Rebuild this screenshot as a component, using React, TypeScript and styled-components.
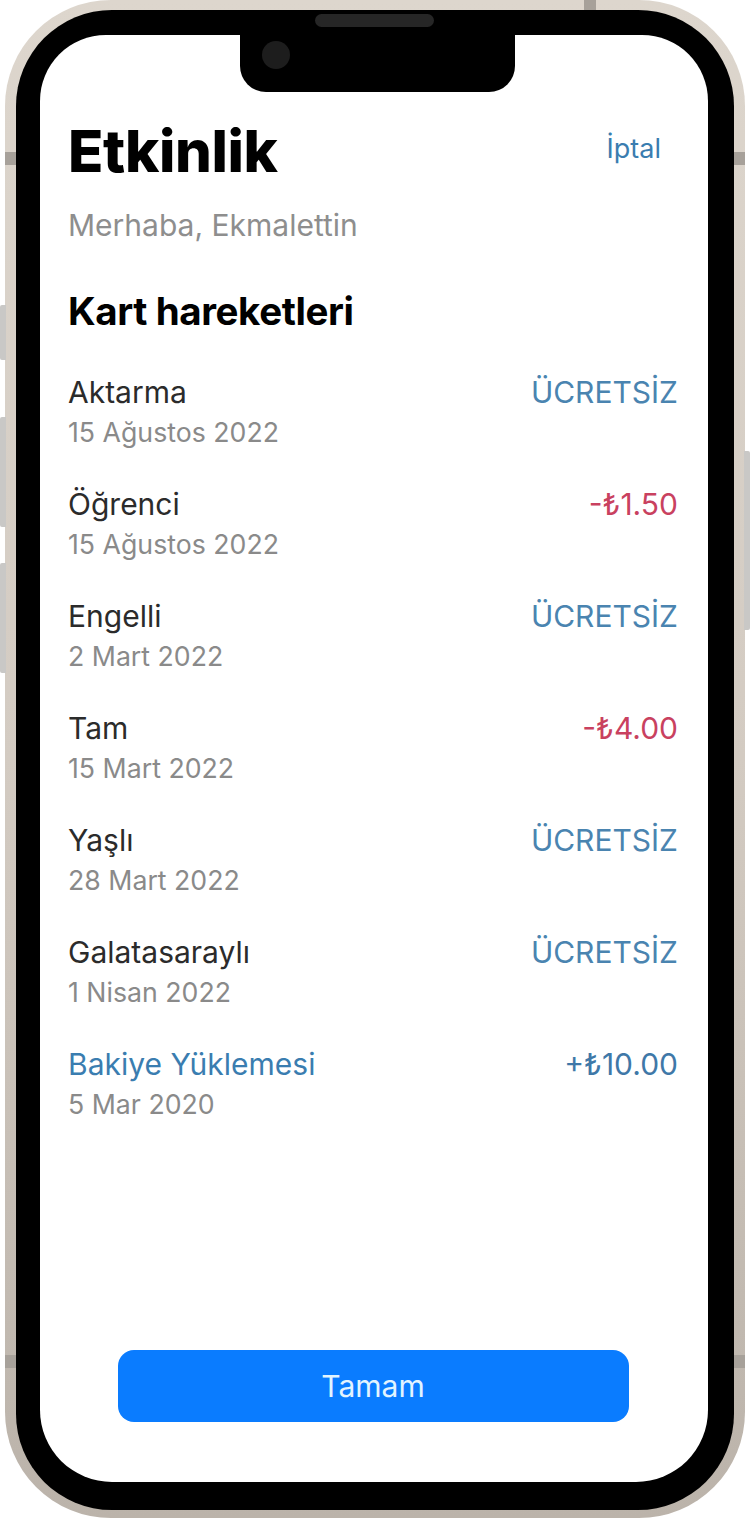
import React from "react";
import styled, { createGlobalStyle } from "styled-components";

const GlobalStyle = createGlobalStyle`
  html, body {
    margin: 0;
    padding: 0;
    background: #ffffff;
  }
  body {
    font-family: Inter, "Noto Sans", "DejaVu Sans", sans-serif;
    -webkit-font-smoothing: antialiased;
  }
  * { box-sizing: border-box; }
`;

const Page = styled.div`
  width: 750px;
  height: 1520px;
  position: relative;
  overflow: hidden;
`;

const Frame = styled.div`
  position: relative;
  margin-left: 5px;
  width: 740px;
  height: 1518px;
  padding: 10px 11px 8px 11px;
  border-radius: 106px;
  background: linear-gradient(180deg, #ddd6cd 0%, #d3cbc2 50%, #bbb3aa 100%);
`;

const SideButton = styled.div<{ $side: "left" | "right"; $top: number; $height: number }>`
  position: absolute;
  top: ${(p) => p.$top}px;
  height: ${(p) => p.$height}px;
  width: 6px;
  ${(p) => (p.$side === "left" ? "left: -5px;" : "right: -5px;")}
  background: #c9c8c6;
  border-radius: ${(p) => (p.$side === "left" ? "2px 0 0 2px" : "0 2px 2px 0")};
`;

const AntennaBand = styled.div<{ $x: number; $y: number; $w: number; $h: number }>`
  position: absolute;
  left: ${(p) => p.$x}px;
  top: ${(p) => p.$y}px;
  width: ${(p) => p.$w}px;
  height: ${(p) => p.$h}px;
  background: #a7a19a;
`;

const Bezel = styled.div`
  height: 100%;
  display: flex;
  flex-direction: column;
  align-items: stretch;
  padding: 4px 26px 28px 24px;
  border-radius: 96px;
  background: #000000;
`;

const Speaker = styled.div`
  align-self: center;
  flex: none;
  width: 119px;
  height: 13px;
  margin-bottom: 8px;
  border-radius: 7px;
  background: #262626;
`;

const Screen = styled.div`
  flex: 1;
  display: flex;
  flex-direction: column;
  padding: 0 30px 60px 28px;
  border-radius: 66px 66px 72px 72px;
  background: #ffffff;
  overflow: hidden;
`;

const Notch = styled.div`
  align-self: center;
  flex: none;
  display: flex;
  align-items: flex-start;
  width: 275px;
  height: 57px;
  margin-left: 8px;
  padding: 6px 0 0 22px;
  background: #000000;
  border-radius: 0 0 26px 26px;
`;

const Camera = styled.div`
  width: 28px;
  height: 28px;
  border-radius: 50%;
  background: #1d1d1d;
`;

const Header = styled.div`
  display: flex;
  justify-content: space-between;
  align-items: flex-start;
  padding-top: 25px;
`;

const Title = styled.h1`
  margin: 0;
  font-size: 58px;
  line-height: 68px;
  font-weight: 800;
  color: #000000;
  letter-spacing: -0.4px;
`;

const CancelLink = styled.span`
  margin-top: 16px;
  margin-right: 17px;
  font-size: 27px;
  line-height: 32px;
  color: #3a7db0;
`;

const Greeting = styled.p`
  margin: 22px 0 0;
  font-size: 30px;
  line-height: 36px;
  color: #8e8e8e;
`;

const SectionTitle = styled.h2`
  margin: 45px 0 0;
  font-size: 38.5px;
  line-height: 46px;
  font-weight: 700;
  color: #000000;
  letter-spacing: -0.4px;
`;

const List = styled.div`
  display: flex;
  flex-direction: column;
  gap: 32px;
  margin-top: 38px;
`;

const Row = styled.div`
  display: flex;
  justify-content: space-between;
  align-items: flex-start;
`;

const RowText = styled.div`
  display: flex;
  flex-direction: column;
`;

const Name = styled.span<{ $accent?: boolean }>`
  font-size: 30px;
  line-height: 40px;
  color: ${(p) => (p.$accent ? "#3a7db0" : "#2b2b2b")};
`;

const DateText = styled.span`
  font-size: 26.7px;
  line-height: 40px;
  color: #8a8a8a;
`;

type Tone = "free" | "debit" | "credit";

const toneColor: Record<Tone, string> = {
  free: "#4a84b0",
  debit: "#c9415f",
  credit: "#3f78a8",
};

const Amount = styled.span<{ $tone: Tone }>`
  font-size: 30px;
  line-height: 40px;
  color: ${(p) => toneColor[p.$tone]};
`;

const DoneButton = styled.button`
  margin-top: auto;
  align-self: center;
  width: 511px;
  height: 72px;
  border: none;
  border-radius: 16px;
  background: #0a7cff;
  color: #e2f4ff;
  font-family: inherit;
  font-size: 30px;
  cursor: pointer;
`;

type Item = { name: string; date: string; amount: string; tone: Tone; accent?: boolean };

const items: Item[] = [
  { name: "Aktarma", date: "15 Ağustos 2022", amount: "ÜCRETSİZ", tone: "free" },
  { name: "Öğrenci", date: "15 Ağustos 2022", amount: "-₺1.50", tone: "debit" },
  { name: "Engelli", date: "2 Mart 2022", amount: "ÜCRETSİZ", tone: "free" },
  { name: "Tam", date: "15 Mart 2022", amount: "-₺4.00", tone: "debit" },
  { name: "Yaşlı", date: "28 Mart 2022", amount: "ÜCRETSİZ", tone: "free" },
  { name: "Galatasaraylı", date: "1 Nisan 2022", amount: "ÜCRETSİZ", tone: "free" },
  { name: "Bakiye Yüklemesi", date: "5 Mar 2020", amount: "+₺10.00", tone: "credit", accent: true },
];

export default function App() {
  return (
    <Page>
      <GlobalStyle />
      <Frame>
        <SideButton $side="left" $top={305} $height={55} />
        <SideButton $side="left" $top={417} $height={110} />
        <SideButton $side="left" $top={563} $height={110} />
        <SideButton $side="right" $top={451} $height={179} />
        <AntennaBand $x={0} $y={152} $w={11} $h={13} />
        <AntennaBand $x={729} $y={152} $w={11} $h={13} />
        <AntennaBand $x={0} $y={1355} $w={11} $h={13} />
        <AntennaBand $x={729} $y={1355} $w={11} $h={13} />
        <AntennaBand $x={579} $y={0} $w={12} $h={10} />
        <Bezel>
          <Speaker />
          <Screen>
            <Notch>
              <Camera />
            </Notch>
            <Header>
              <Title>Etkinlik</Title>
              <CancelLink>İptal</CancelLink>
            </Header>
            <Greeting>Merhaba, Ekmalettin</Greeting>
            <SectionTitle>Kart hareketleri</SectionTitle>
            <List>
              {items.map((it) => (
                <Row key={it.name}>
                  <RowText>
                    <Name $accent={it.accent}>{it.name}</Name>
                    <DateText>{it.date}</DateText>
                  </RowText>
                  <Amount $tone={it.tone}>{it.amount}</Amount>
                </Row>
              ))}
            </List>
            <DoneButton>Tamam</DoneButton>
          </Screen>
        </Bezel>
      </Frame>
    </Page>
  );
}
